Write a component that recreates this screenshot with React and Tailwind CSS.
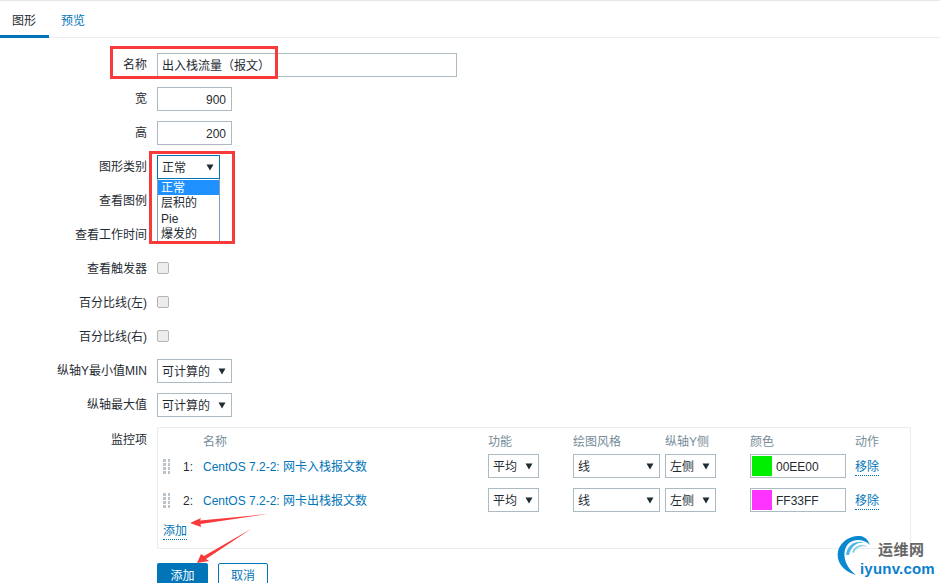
function Caret() {
  return (
    <svg width="8" height="7" viewBox="0 0 8 7" className="shrink-0">
      <path d="M0.5 0.5H7.5L4 6.5Z" fill="#1f2c33" />
    </svg>
  );
}

function Select({ value, w, focus }) {
  return (
    <div className={`${w} h-[24px] flex items-center justify-between pl-[4px] pr-[5px] border bg-white text-[12px] text-[#1f2c33] ${focus ? "border-[#0275b8]" : "border-[#acbbc2]"}`}>
      <span className="pt-[2px]">{value}</span>
      <Caret />
    </div>
  );
}

function Row({ label, children, center = true }) {
  return (
    <div className={`flex gap-[10px] ${center ? "items-center h-[24px]" : "items-start"} mb-[10px]`}>
      <div className="w-[147px] text-right text-[12px] leading-[26px] text-[#1f2c33] shrink-0">{label}</div>
      {children}
    </div>
  );
}

function Check() {
  return <div className="w-[12px] h-[12px] -mt-[2px] rounded-[2px] border border-[#b4b4b4] bg-[#ededed]" />;
}

function Grip() {
  return (
    <div className="grid grid-cols-2 gap-x-[2px] gap-y-[1px] w-[7px]">
      {Array.from({ length: 8 }).map((_, i) => (
        <div key={i} className="w-[2.5px] h-[3px] bg-[#b9c3c9]" />
      ))}
    </div>
  );
}

function ItemRow({ n, name, color, hex }) {
  return (
    <div className="grid grid-cols-[45px_285px_85px_92px_85px_105px_auto] items-center h-[24px] mb-[10px] text-[12px]">
      <div className="flex items-center pl-[5px]">
        <Grip />
        <span className="w-[23px] pt-[2px] text-right text-[#1f2c33]">{n}:</span>
      </div>
      <a className="text-[#0275b8] pt-[2px]">{name}</a>
      <Select value="平均" w="w-[51px]" />
      <Select value="线" w="w-[87px]" />
      <Select value="左侧" w="w-[51px]" />
      <div className="w-[96px] h-[24px] border border-[#acbbc2] flex items-center pl-[1px] gap-[4px]">
        <div className={`w-[20px] h-[20px] ${color}`} />
        <span className="text-[#1f2c33] pt-[2px]">{hex}</span>
      </div>
      <a className="text-[#0275b8] mt-[3px] border-b border-dotted border-[#0275b8] leading-[15px] justify-self-start">移除</a>
    </div>
  );
}

export default function App() {
  return (
    <div
      className="relative w-[940px] h-[583px] overflow-hidden bg-white text-[12px]"
      style={{ fontFamily: '"Liberation Sans", "Noto Sans CJK SC", sans-serif' }}
    >
      <div className="h-[38px] border-t border-[#e4e8ea] border-b border-b-[#ebeef0] flex">
        <div className="w-[49px] h-[37px] pl-[12px] pt-[11px] border-b-[3px] border-[#0275b8] text-[#1f2c33]">图形</div>
        <div className="pl-[12px] pt-[11px] text-[#0275b8]">预览</div>
      </div>

      <div className="pt-[15px]">
        <Row label="名称">
          <div className="w-[300px] h-[24px] border border-[#acbbc2] px-[4px] leading-[24px] text-[#1f2c33]">出入栈流量（报文）</div>
        </Row>
        <Row label="宽">
          <div className="w-[75px] h-[24px] border border-[#acbbc2] px-[5px] leading-[24px] text-right text-[#1f2c33]">900</div>
        </Row>
        <Row label="高">
          <div className="w-[75px] h-[24px] border border-[#acbbc2] px-[5px] leading-[24px] text-right text-[#1f2c33]">200</div>
        </Row>
        <Row label="图形类别">
          <Select value="正常" w="w-[63px]" focus />
        </Row>
        <Row label="查看图例"><Check /></Row>
        <Row label="查看工作时间"><Check /></Row>
        <Row label="查看触发器"><Check /></Row>
        <Row label="百分比线(左)"><Check /></Row>
        <Row label="百分比线(右)"><Check /></Row>
        <Row label="纵轴Y最小值MIN"><Select value="可计算的" w="w-[75px]" /></Row>
        <Row label="纵轴最大值"><Select value="可计算的" w="w-[75px]" /></Row>
        <Row label="监控项" center={false}>
          <div className="w-[754px] h-[122px] border border-[#ebeef0]">
            <div className="grid grid-cols-[45px_285px_85px_92px_85px_105px_auto] h-[26px] pt-[2px] items-center text-[#768d99]">
              <span />
              <span>名称</span>
              <span>功能</span>
              <span>绘图风格</span>
              <span>纵轴Y侧</span>
              <span>颜色</span>
              <span>动作</span>
            </div>
            <ItemRow n="1" name="CentOS 7.2-2: 网卡入栈报文数" color="bg-[#00ee00]" hex="00EE00" />
            <ItemRow n="2" name="CentOS 7.2-2: 网卡出栈报文数" color="bg-[#ff33ff]" hex="FF33FF" />
            <a className="ml-[5px] inline-block text-[#0275b8] border-b border-dotted border-[#0275b8] leading-[15px]">添加</a>
          </div>
        </Row>
        <div className="flex pl-[157px] gap-[10px] mt-[14px]">
          <div className="w-[51px] h-[26px] rounded-t-[2px] bg-[#0275b8] text-white text-center leading-[26px]">添加</div>
          <div className="w-[50px] h-[26px] rounded-[2px] border border-[#0275b8] text-[#0275b8] text-center leading-[24px]">取消</div>
        </div>
      </div>

      {/* open select list */}
      <div className="absolute left-[157px] top-[179px] w-[63px] h-[64px] pt-[1px] bg-white border-x border-[#7f9db9] text-[#1f2c33] text-[12px]">
        <div className="bg-[#1e90ff] text-white pl-[3px] h-[15px] leading-[17px]">正常</div>
        <div className="pl-[3px] h-[16px] leading-[16px]">层积的</div>
        <div className="pl-[3px] h-[15px] leading-[16px]">Pie</div>
        <div className="pl-[3px] h-[15px] leading-[17px]">爆发的</div>
      </div>

      {/* red annotations */}
      <div className="absolute left-[110px] top-[46px] w-[168px] h-[33px] border-[3px] border-[#f93a3a]" />
      <div className="absolute left-[149px] top-[151px] w-[86px] h-[93px] border-[3px] border-[#f93a3a]" />
      <svg className="absolute left-0 top-0 pointer-events-none" width="940" height="583">
        <path d="M190 523L201 518L200 520.5L268 514L200.5 524L201 527Z" fill="#f93a3a" />
        <path d="M197 563L201 554L204 556L251 529L206 559L209 561Z" fill="#f93a3a" />
      </svg>

      {/* watermark logo */}
      <div className="absolute left-[836px] top-[535px] w-[104px] h-[48px]">
        <svg className="absolute left-0 top-0" width="44" height="48" viewBox="0 0 44 48" fill="none">
          <path d="M20 40C6 36 0 26 2 16C5 5 16 0 24 1C29 1.5 32 5 34 10C28 4 18 3 12 9C6 16 7 30 20 40Z" fill="#0a88cf" />
          <path d="M10 20C11 10 20 4 30 8C22 6 15 11 13 20Z" fill="#49b6e6" />
          <path d="M16 17C19 10 26 8 32 12C26 10 20 12 18 18Z" fill="#8bd0ef" />
        </svg>
        <span className="absolute left-[42px] top-[6px] text-[15px] leading-[18px] font-bold tracking-[0.5px] text-[#666]">运维网</span>
        <span className="absolute left-[24px] top-[25px] text-[15px] leading-[18px] font-bold tracking-[0.2px] text-[#0a7fd0]">iyunv.com</span>
      </div>
    </div>
  );
}
